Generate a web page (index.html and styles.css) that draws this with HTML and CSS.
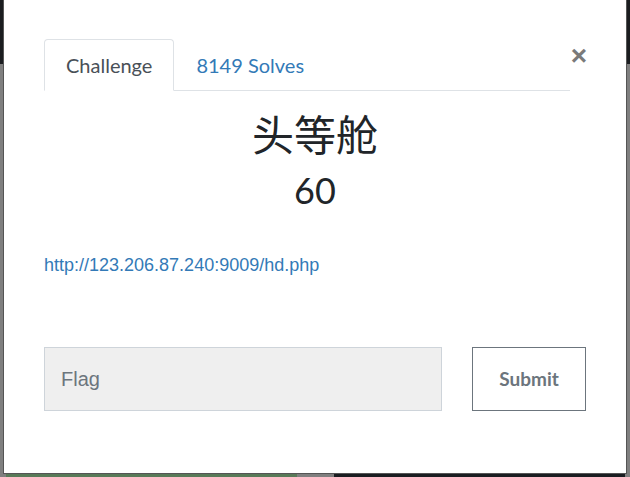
FILE: index.html
```html
<!DOCTYPE html>
<html lang="en">
<head>
    <meta charset="UTF-8">
    <meta name="viewport" content="width=device-width, initial-scale=1.0">
    <title>Challenge</title>
    <link rel="stylesheet" href="styles.css">
</head>
<body>
    <div class="navbar"></div>
    <div class="page-bottom">
        <div class="card-green"></div>
        <div class="card-dark"></div>
    </div>

    <div class="modal">
        <button type="button" class="close">&times;</button>
        <div class="modal-body">
            <ul class="nav-tabs">
                <li><a href="#" class="active">Challenge</a></li>
                <li><a href="#">8149 Solves</a></li>
            </ul>
            <h2 class="challenge-name">头等舱</h2>
            <h3 class="challenge-value">60</h3>
            <div class="challenge-desc">
                <a href="#">http://123.206.87.240:9009/hd.php</a>
            </div>
            <form class="flag-form">
                <input type="text" class="flag-input" placeholder="Flag">
                <button type="button" class="submit-btn">Submit</button>
            </form>
        </div>
    </div>
</body>
</html>
```

FILE: styles.css
```css
body {
    margin: 0;
    height: 477px;
    overflow: hidden;
    background-color: #7f7f7f;
    font-family: Lato, "Noto Sans", sans-serif;
}
.navbar {
    height: 64px;
    background-color: #1b1d20;
}
.page-bottom {
    position: absolute;
    top: 474px;
    left: 0;
    right: 0;
    height: 10px;
    display: flex;
    gap: 37px;
    padding-left: 6px;
}
.card-green {
    width: 291px;
    background-color: #587a58;
}
.card-dark {
    width: 291px;
    background-color: #1a1d21;
}
.modal {
    position: absolute;
    left: 3px;
    top: -10px;
    width: 622px;
    height: 482px;
    background-color: #fff;
    border: 1px solid #555;
}
.close {
    position: absolute;
    top: 51px;
    right: 39px;
    padding: 0;
    background: none;
    border: none;
    font-family: "Liberation Sans", Arial, sans-serif;
    font-size: 28px;
    font-weight: 700;
    line-height: 1;
    color: #7a7a7a;
    cursor: pointer;
}
.modal-body {
    padding: 48px 40px 0;
}
.nav-tabs {
    list-style-type: none;
    margin: 0 16px 0 0;
    padding: 0;
    display: flex;
    border-bottom: 1px solid #dee2e6;
}
.nav-tabs a {
    display: block;
    margin-bottom: -1px;
    padding: 14px 21px 14px 21px;
    line-height: 22px;
    font-size: 20px;
    color: #337ab7;
    text-decoration: none;
    border: 1px solid transparent;
    border-radius: 4px 4px 0 0;
}
.nav-tabs a.active {
    color: #495057;
    background-color: #fff;
    border-color: #dee2e6 #dee2e6 #fff;
}
.challenge-name {
    margin: 17px 0 0;
    text-align: center;
    font-family: Lato, "Noto Sans CJK SC", sans-serif;
    font-size: 42px;
    font-weight: 400;
    line-height: 54px;
    color: #212529;
}
.challenge-value {
    margin: 3px 0 0;
    text-align: center;
    font-size: 36px;
    font-weight: 400;
    line-height: 50px;
    color: #212529;
}
.challenge-desc {
    margin-top: 38px;
    font-family: "Liberation Sans", Arial, sans-serif;
    font-size: 18px;
    line-height: 24px;
}
.challenge-desc a {
    color: #337ab7;
    text-decoration: none;
}
.flag-form {
    display: flex;
    justify-content: space-between;
    margin-top: 70px;
}
.flag-input {
    box-sizing: border-box;
    width: 398px;
    height: 64px;
    padding: 0 16px;
    background-color: #efefef;
    border: 1px solid #ced4da;
    font-family: "Liberation Sans", Arial, sans-serif;
    font-size: 20px;
    color: #495057;
}
.flag-input::placeholder {
    color: #6c757d;
}
.submit-btn {
    box-sizing: border-box;
    width: 114px;
    height: 64px;
    padding-bottom: 3px;
    background-color: #fff;
    border: 1px solid #6c757d;
    font-family: Lato, sans-serif;
    font-size: 19px;
    font-weight: 700;
    color: #6c757d;
}
```
